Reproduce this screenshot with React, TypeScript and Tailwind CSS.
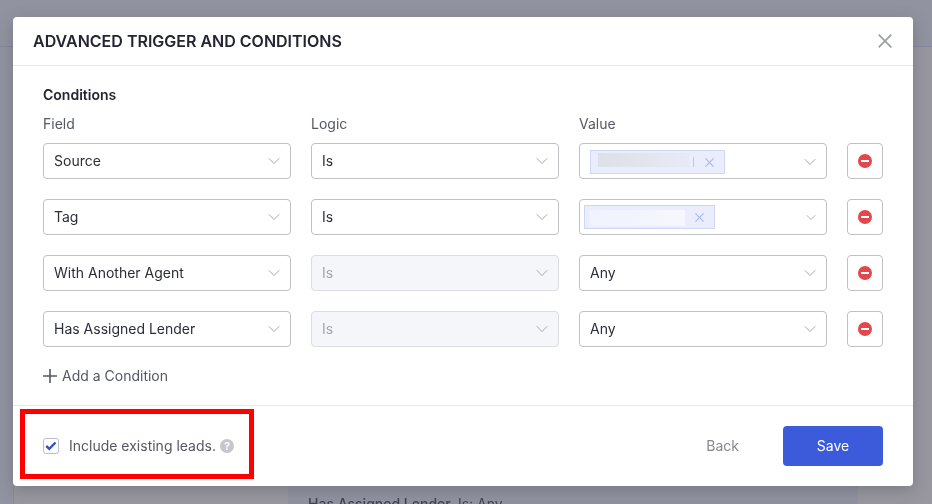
import { useState } from "react";
import clsx from "clsx";

type Condition = {
  field: string;
  logicDisabled?: boolean;
  value?: string;
  chip?: "source" | "tag";
};

const initialConditions: Condition[] = [
  { field: "Source", chip: "source" },
  { field: "Tag", chip: "tag" },
  { field: "With Another Agent", logicDisabled: true, value: "Any" },
  { field: "Has Assigned Lender", logicDisabled: true, value: "Any" },
];

const fields = initialConditions.map((c) => c.field);

const Chevron = ({ className }: { className?: string }) => (
  <svg
    viewBox="0 0 12 8"
    className={clsx("shrink-0", className)}
    fill="none"
    stroke="#a6a8af"
    aria-hidden="true"
  >
    <path d="M0.8 1.2 6 6.6l5.2-5.4" />
  </svg>
);

const Cross = ({ className }: { className?: string }) => (
  <svg viewBox="0 0 14 14" className={className} fill="none" stroke="currentColor" aria-hidden="true">
    <path d="M0.7 0.7l12.6 12.6M13.3 0.7L0.7 13.3" strokeWidth="1.7" />
  </svg>
);

const SelectBox = ({
  options,
  value,
  labelledBy,
  disabled,
}: {
  options: string[];
  value: string;
  labelledBy: string;
  disabled?: boolean;
}) => (
  <div className="relative">
    <select
      defaultValue={value}
      disabled={disabled}
      aria-labelledby={labelledBy}
      className={clsx(
        "block h-9 w-full appearance-none rounded border px-2.5 text-sm opacity-100 outline-none",
        disabled
          ? "border-[#dcdde1] bg-[#f5f6fa] text-[#a3a5ad]"
          : "border-[#c0c1c6] bg-white text-[#2b2d38]"
      )}
    >
      {options.map((option) => (
        <option key={option}>{option}</option>
      ))}
    </select>
    <Chevron className="pointer-events-none absolute top-[14px] right-[11px] h-2 w-3" />
  </div>
);

const ChipBox = ({ kind }: { kind: "source" | "tag" }) => (
  <div
    className={clsx(
      "flex h-9 items-center justify-between rounded border border-[#c0c1c6] bg-white pr-2.5",
      kind === "source" ? "pt-0.5 pl-2.5" : "pl-1"
    )}
  >
    <span
      className={clsx(
        "flex h-6 items-center border border-[#d0d7f2] bg-[#e9edfc] pr-2.5",
        kind === "source" ? "w-[135px] pl-[7px]" : "w-[131px] pl-1"
      )}
    >
      {kind === "source" ? (
        <>
          <span className="mb-1 h-3.5 w-[92px] bg-linear-to-r from-[#dfe1ea] via-[#e3e5ed] to-[#e7eaf6]" />
          <span className="ml-[3px] h-2.5 w-px bg-[#bcc6ee]" />
        </>
      ) : (
        <span className="mt-0.5 h-4 w-24 bg-linear-to-r from-[#f0f2fd] to-[#f6f7fe]" />
      )}
      <button type="button" aria-label="Remove value" className="ml-auto text-[#aab7ea]">
        <Cross className="size-[9px]" />
      </button>
    </span>
    <Chevron className={kind === "source" ? "h-2 w-3" : "h-[7px] w-2.5"} />
  </div>
);

const Backdrop = () => (
  <div className="fixed inset-0 flex flex-col bg-[#9293a0]" aria-hidden="true">
    <div className="h-[47px] shrink-0 border-b border-[#85869a]" />
    <div className="ml-[13px] flex flex-1 items-end border-l border-[#8a8a96] bg-[#98979f]">
      <div className="mr-[74px] ml-[274px] h-40 flex-1 bg-[#9192a0] px-5">
        <p className="mt-[150px] text-sm text-[#434452]">
          <span className="font-medium">Has Assigned Lender.</span> Is: Any
        </p>
      </div>
    </div>
  </div>
);

const App = () => {
  const [conditions, setConditions] = useState(initialConditions);
  const [include, setInclude] = useState(true);

  const addCondition = () =>
    setConditions([...conditions, { field: "Has Assigned Lender", logicDisabled: true, value: "Any" }]);

  return (
    <main className="font-['Inter',sans-serif] text-sm">
      <Backdrop />
      <div className="relative pt-[17px] pr-[19px] pb-[18px] pl-[13px]">
        <section
          role="dialog"
          aria-labelledby="dialog-title"
          className="rounded bg-white shadow-[0_4px_16px_rgba(40,42,60,0.25)]"
        >
          <header className="flex h-[49px] items-center justify-between border-b border-[#e8e8ec] pr-[21px] pl-5">
            <h1 id="dialog-title" className="text-base font-semibold text-[#232530]">
              ADVANCED TRIGGER AND CONDITIONS
            </h1>
            <button type="button" aria-label="Close" className="text-[#9c9ea6]">
              <Cross className="size-3.5" />
            </button>
          </header>

          <div className="px-[30px] py-[19px]">
            <h2 className="font-semibold text-[#232530]">Conditions</h2>
            <div className="mt-[9px] grid grid-cols-[1fr_1fr_1fr_36px] gap-x-5 text-[#565864]">
              <span id="field-label">Field</span>
              <span id="logic-label">Logic</span>
              <span id="value-label">Value</span>
            </div>
            <div className="mt-[9px] space-y-5">
              {conditions.map((condition, index) => (
                <div key={index} className="grid grid-cols-[1fr_1fr_1fr_36px] gap-x-5">
                  <SelectBox options={fields} value={condition.field} labelledBy="field-label" />
                  <SelectBox
                    options={["Is", "Is not"]}
                    value="Is"
                    labelledBy="logic-label"
                    disabled={condition.logicDisabled}
                  />
                  {condition.chip ? (
                    <ChipBox kind={condition.chip} />
                  ) : (
                    <SelectBox options={["Any", "None"]} value="Any" labelledBy="value-label" />
                  )}
                  <button
                    type="button"
                    aria-label="Delete condition"
                    onClick={() => setConditions(conditions.filter((_, i) => i !== index))}
                    className="flex size-9 items-center justify-center rounded border border-[#c0c1c6] bg-white"
                  >
                    <svg viewBox="0 0 14 14" className="size-3.5" aria-hidden="true">
                      <circle cx="7" cy="7" r="7" fill="#e3474c" />
                      <path d="M3 7h8" stroke="#fff" strokeWidth="2" />
                    </svg>
                  </button>
                </div>
              ))}
            </div>
            <button
              type="button"
              onClick={addCondition}
              className="mt-[19px] flex items-center gap-[5px] text-[#565864]"
            >
              <svg viewBox="0 0 14 14" className="size-3.5" stroke="currentColor" strokeWidth="1.6" aria-hidden="true">
                <path d="M7 0v14M0 7h14" />
              </svg>
              Add a Condition
            </button>
          </div>

          <footer className="relative flex items-center justify-between border-t border-[#e8e8ec] px-[30px] py-5">
            <div className="flex items-center gap-1 text-[#565864]">
              <label className="flex items-center gap-2.5">
                <span className="relative size-4">
                  <input
                    type="checkbox"
                    checked={include}
                    onChange={(e) => setInclude(e.target.checked)}
                    className="block size-4 appearance-none rounded-[3px] border border-[#b9bcd6] bg-white"
                  />
                  {include && (
                    <svg
                      viewBox="0 0 16 16"
                      className="pointer-events-none absolute inset-0 size-4"
                      fill="none"
                      stroke="#3552c4"
                      strokeWidth="2.4"
                      aria-hidden="true"
                    >
                      <path d="M3.2 8l3.1 2.8 6.2-6.3" />
                    </svg>
                  )}
                </span>
                Include existing leads.
              </label>
              <button
                type="button"
                aria-label="Help"
                className="flex size-3.5 items-center justify-center rounded-full bg-[#c6c7cd] text-[11px] leading-none font-bold text-white"
              >
                ?
              </button>
            </div>
            <div className="flex items-center gap-11">
              <button type="button" className="text-[#868892]">
                Back
              </button>
              <button type="button" className="h-10 w-[100px] rounded bg-[#3b5bdb] text-white">
                Save
              </button>
            </div>
            <div className="pointer-events-none absolute top-[3px] left-[7px] h-[70px] w-[234px] border-5 border-[#fe0000]" />
          </footer>
        </section>
      </div>
    </main>
  );
};

export default App;
